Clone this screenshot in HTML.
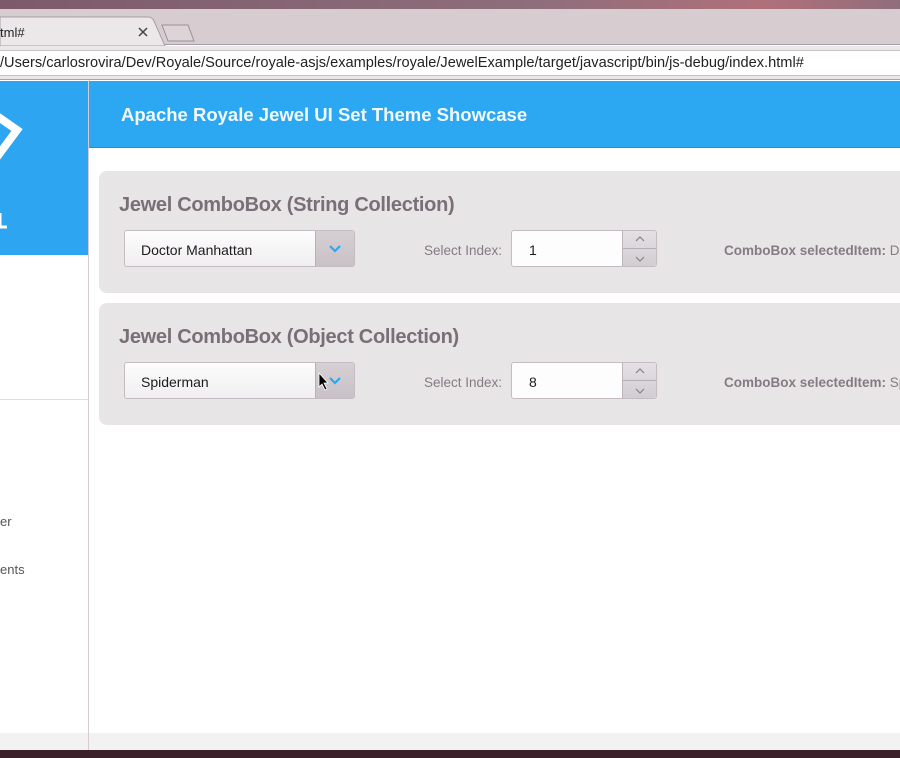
<!DOCTYPE html>
<html><head><meta charset="utf-8"><style>
*{margin:0;padding:0;box-sizing:border-box}
body{width:900px;height:758px;overflow:hidden;position:relative;background:#fff;font-family:"Liberation Sans",sans-serif}
.a{position:absolute}
.panel{position:absolute;left:99px;width:820px;height:122px;background:#e7e5e5;border-radius:8px}
.ttl{position:absolute;left:20px;top:23px;font-size:20px;font-weight:bold;color:#7a6f78;letter-spacing:-0.3px}
.cb{position:absolute;left:25px;top:59px;width:231px;height:37px;border:1px solid #c4bcc2;border-radius:3px;background:linear-gradient(#fdfdfd,#f0eef0);overflow:hidden}
.cb span{position:absolute;left:16px;top:11px;font-size:14px;color:#1e1a1e}
.cb i{position:absolute;right:0;top:0;width:39px;height:100%;background:linear-gradient(#d6d0d4,#c8c1c6);border-left:1px solid #b9b1b7}
.lbl{position:absolute;left:325px;top:72px;font-size:13.5px;color:#857b85}
.ns{position:absolute;left:412px;top:59px;width:146px;height:37px;border:1px solid #c4bcc2;border-radius:3px;background:#fdfdfd;overflow:hidden}
.ns span{position:absolute;left:17px;top:11px;font-size:14px;color:#1e1a1e}
.ns i{position:absolute;right:0;top:0;width:34px;height:100%;background:linear-gradient(#e4e0e3,#d2cdd1);border-left:1px solid #bdb5bb}
.ns i b{position:absolute;left:0;right:0;top:17px;height:1px;background:#b5adb3}
.sel{position:absolute;left:625px;top:72px;font-size:13.5px;color:#857b85;white-space:nowrap}
</style></head><body>
<div class="a" style="left:0;top:0;width:900px;height:9px;background:linear-gradient(90deg,#7c5a6a,#8f6e7c 60%,#b0707a 85%,#8f6e7c)"></div>
<div class="a" style="left:0;top:9px;width:900px;height:36px;background:#d7cdd0;border-bottom:1px solid #a89ca8"></div>
<svg class="a" style="left:0;top:9px" width="200" height="37"><path d="M0 8 L148 8 Q152 8 154 12 L165 37 L0 37Z" fill="#ece8ea" stroke="#a89ca8"/><path d="M162 16 L188 16 L194 32 L168 32Z" fill="#dcd4d7" stroke="#9a8f9a"/><text x="0" y="28" font-family="Liberation Sans" font-size="13" fill="#222">tml#</text><path d="M139 19 L147 27 M147 19 L139 27" stroke="#444" stroke-width="1.5"/></svg>
<div class="a" style="left:0;top:46px;width:900px;height:34px;background:#ebe7e9;border-bottom:1px solid #a9a3a9"></div>
<div class="a" style="left:0;top:50px;width:900px;height:26px;background:#fff;border-top:1px solid #c8c2c8;border-bottom:1px solid #c8c2c8"></div>
<div class="a" style="left:0;top:55px;font-size:14.6px;color:#222;white-space:nowrap">/Users/carlosrovira/Dev/Royale/Source/royale-asjs/examples/royale/JewelExample/target/javascript/bin/js-debug/index.html#</div>
<div class="a" style="left:0;top:81px;width:88px;height:174px;background:#2da5f0"></div>
<svg class="a" style="left:0;top:81px" width="88" height="174"><path d="M-6 33 L17 49 L-6 80" fill="none" stroke="#fff" stroke-width="8"/><path d="M0 132 V146 H7" fill="none" stroke="#fff" stroke-width="3"/></svg>
<div class="a" style="left:88px;top:81px;width:1px;height:677px;background:#d4ccd0"></div>
<div class="a" style="left:89px;top:81px;width:811px;height:67px;background:#2ca8f3;border-bottom:1px solid #2a8fd0"></div>
<div class="a" style="left:121px;top:104px;font-size:18.5px;font-weight:bold;color:#f2f8fd">Apache Royale Jewel UI Set Theme Showcase</div>
<div class="a" style="left:0;top:399px;width:88px;height:1px;background:#ddd"></div>
<div class="a" style="left:0;top:514px;font-size:13px;color:#555">er</div>
<div class="a" style="left:0;top:562px;font-size:13px;color:#555">ents</div>
<div class="panel" style="top:171px"><div class="ttl">Jewel ComboBox (String Collection)</div>
<div class="cb"><span>Doctor Manhattan</span><i><svg width="39" height="35"><path d="M14 15 L19 20 L24 15" fill="none" stroke="#2ca8f3" stroke-width="2.2"/></svg></i></div>
<div class="lbl">Select Index:</div>
<div class="ns"><span>1</span><i><b></b><svg width="34" height="35" style="position:absolute;left:0;top:0"><path d="M13 10 L17 6 L21 10 M13 26 L17 30 L21 26" fill="none" stroke="#8a8088" stroke-width="1.2"/></svg></i></div>
<div class="sel"><b>ComboBox selectedItem:</b> Do</div></div>
<div class="panel" style="top:303px"><div class="ttl">Jewel ComboBox (Object Collection)</div>
<div class="cb"><span>Spiderman</span><i><svg width="39" height="35"><path d="M14 15 L19 20 L24 15" fill="none" stroke="#2ca8f3" stroke-width="2.2"/><path d="M3 10 L3 24 L6 21 L9 27 L11 26 L8 20 L12 20Z" fill="#000" stroke="#fff" stroke-width="0.8"/></svg></i></div>
<div class="lbl">Select Index:</div>
<div class="ns"><span>8</span><i><b></b><svg width="34" height="35" style="position:absolute;left:0;top:0"><path d="M13 10 L17 6 L21 10 M13 26 L17 30 L21 26" fill="none" stroke="#8a8088" stroke-width="1.2"/></svg></i></div>
<div class="sel"><b>ComboBox selectedItem:</b> Spi</div></div>
<div class="a" style="left:0;top:733px;width:900px;height:17px;background:#f2f2f2"></div>
<div class="a" style="left:88px;top:733px;width:1px;height:17px;background:#d4ccd0"></div>
<div class="a" style="left:0;top:750px;width:900px;height:8px;background:#3a2029"></div>
</body></html>
